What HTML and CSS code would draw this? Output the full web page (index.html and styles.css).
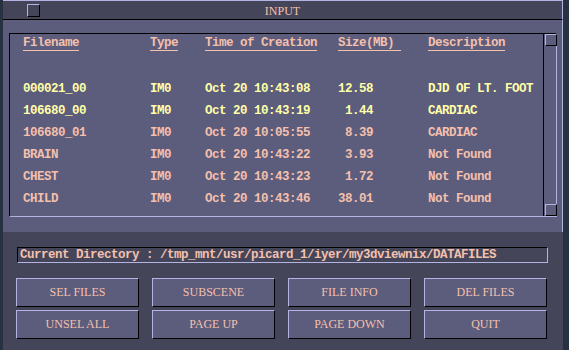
FILE: index.html
```html
<!DOCTYPE html>
<html>
<head>
<meta charset="utf-8">
<link rel="stylesheet" href="styles.css">
</head>
<body>
<div class="window">
  <div class="titlebar">
    <span class="title-box"></span>
    <span class="title">INPUT</span>
  </div>
  <div class="panel">
    <div class="list-frame">
      <div class="list">
        <div class="row header">
          <span class="c1"><span class="ul">Filename</span></span>
          <span class="c2"><span class="ul">Type</span></span>
          <span class="c3"><span class="ul">Time of Creation</span></span>
          <span class="c4"><span class="ul">Size(MB) </span></span>
          <span class="c5"><span class="ul">Description</span></span>
        </div>
        <div class="row sel">
          <span class="c1">000021_00</span><span class="c2">IM0</span><span class="c3">Oct 20 10:43:08</span><span class="c4">12.58</span><span class="c5">DJD OF LT. FOOT</span>
        </div>
        <div class="row sel">
          <span class="c1">106680_00</span><span class="c2">IM0</span><span class="c3">Oct 20 10:43:19</span><span class="c4"> 1.44</span><span class="c5">CARDIAC</span>
        </div>
        <div class="row">
          <span class="c1">106680_01</span><span class="c2">IM0</span><span class="c3">Oct 20 10:05:55</span><span class="c4"> 8.39</span><span class="c5">CARDIAC</span>
        </div>
        <div class="row">
          <span class="c1">BRAIN</span><span class="c2">IM0</span><span class="c3">Oct 20 10:43:22</span><span class="c4"> 3.93</span><span class="c5">Not Found</span>
        </div>
        <div class="row">
          <span class="c1">CHEST</span><span class="c2">IM0</span><span class="c3">Oct 20 10:43:23</span><span class="c4"> 1.72</span><span class="c5">Not Found</span>
        </div>
        <div class="row">
          <span class="c1">CHILD</span><span class="c2">IM0</span><span class="c3">Oct 20 10:43:46</span><span class="c4">38.01</span><span class="c5">Not Found</span>
        </div>
      </div>
      <div class="scrollbar">
        <span class="sq"></span>
        <span class="sq"></span>
      </div>
    </div>
  </div>
  <div class="bottom">
    <div class="curdir"><span class="pre">Current Directory : /tmp_mnt/usr/picard_1/iyer/my3dviewnix/DATAFILES</span></div>
    <div class="buttons">
      <div class="btn">SEL FILES</div>
      <div class="btn">SUBSCENE</div>
      <div class="btn">FILE INFO</div>
      <div class="btn">DEL FILES</div>
      <div class="btn">UNSEL ALL</div>
      <div class="btn">PAGE UP</div>
      <div class="btn">PAGE DOWN</div>
      <div class="btn">QUIT</div>
    </div>
  </div>
</div>
</body>
</html>
```

FILE: styles.css
```css
html, body {
  margin: 0;
  padding: 0;
  background: #263240;
  width: 569px;
  height: 350px;
  overflow: hidden;
}
.window {
  margin-left: 3px;
  width: 560px;
  height: 350px;
  display: flex;
  flex-direction: column;
  background: #45455a;
}
.titlebar {
  flex: none;
  height: 18px;
  border-top: 1px solid #b4b4e4;
  border-bottom: 1px solid #000;
  border-right: 1px solid #b4b4e4;
  background: #45455a;
  position: relative;
  display: flex;
  align-items: center;
  justify-content: center;
}
.title-box {
  position: absolute;
  left: 24px;
  top: 3px;
  width: 11px;
  height: 11px;
  border-top: 1px solid #b4b4e4;
  border-left: 1px solid #b4b4e4;
  border-right: 1px solid #000;
  border-bottom: 1px solid #000;
}
.title {
  font-family: "Liberation Serif", serif;
  font-size: 12px;
  color: #f4c0ac;
  line-height: 18px;
  padding-top: 2px;
}
.panel {
  flex: none;
  height: 212px;
  background: #5c5c7c;
  border-right: 1px solid #b4b4e4;
  box-sizing: border-box;
  padding-top: 13px;
  padding-left: 6px;
}
.list-frame {
  width: 548px;
  height: 184px;
  box-sizing: border-box;
  border-top: 1px solid #000;
  border-left: 1px solid #000;
  border-right: 1px solid #b4b4e4;
  border-bottom: 1px solid #b4b4e4;
  display: flex;
}
.list {
  flex: 1;
  border-right: 1px solid #000;
  padding-left: 13px;
  font-family: "Liberation Mono", monospace;
  font-weight: bold;
  font-size: 12.5px;
  letter-spacing: -0.5px;
  color: #f4c0ac;
}
.row {
  display: flex;
  height: 22px;
  line-height: 22px;
}
.row > span {
  white-space: pre;
}
.row.header {
  height: 44px;
  line-height: 13px;
  padding-top: 3px;
  box-sizing: border-box;
}
.ul {
  display: inline-block;
  border-bottom: 1px solid #f4c0ac;
  line-height: 13px;
  white-space: pre;
}
.row.sel {
  color: #ffffa8;
}
.c1 { width: 127px; flex: none; }
.c2 { width: 55px; flex: none; }
.c3 { width: 133px; flex: none; }
.c4 { width: 90px; flex: none; }
.c5 { flex: 1; }
.scrollbar {
  width: 12px;
  display: flex;
  flex-direction: column;
  justify-content: space-between;
}
.sq {
  display: block;
  width: 10px;
  height: 10px;
  margin-left: 1px;
  border-top: 1px solid #b4b4e4;
  border-left: 1px solid #b4b4e4;
  border-right: 1px solid #000;
  border-bottom: 1px solid #000;
}
.bottom {
  flex: 1;
  padding-left: 13px;
  padding-top: 15px;
}
.curdir {
  margin-left: 1px;
  width: 531px;
  height: 16px;
  box-sizing: border-box;
  border-top: 1px solid #000;
  border-left: 1px solid #000;
  border-right: 1px solid #b4b4e4;
  border-bottom: 1px solid #b4b4e4;
  padding-left: 2px;
  font-family: "Liberation Mono", monospace;
  font-weight: bold;
  font-size: 12.5px;
  letter-spacing: -0.5px;
  line-height: 15px;
  color: #f4c0ac;
}
.pre {
  white-space: pre;
}
.buttons {
  margin-top: 15px;
  display: grid;
  grid-template-columns: repeat(4, 123px);
  grid-auto-rows: 29px;
  column-gap: 13px;
  row-gap: 3px;
}
.btn {
  box-sizing: border-box;
  background: #5c5c7c;
  border-top: 1px solid #b4b4e4;
  border-left: 1px solid #b4b4e4;
  border-right: 1px solid #000;
  border-bottom: 1px solid #000;
  font-family: "Liberation Serif", serif;
  font-size: 12px;
  color: #f4c0ac;
  display: flex;
  align-items: center;
  justify-content: center;
}
```
